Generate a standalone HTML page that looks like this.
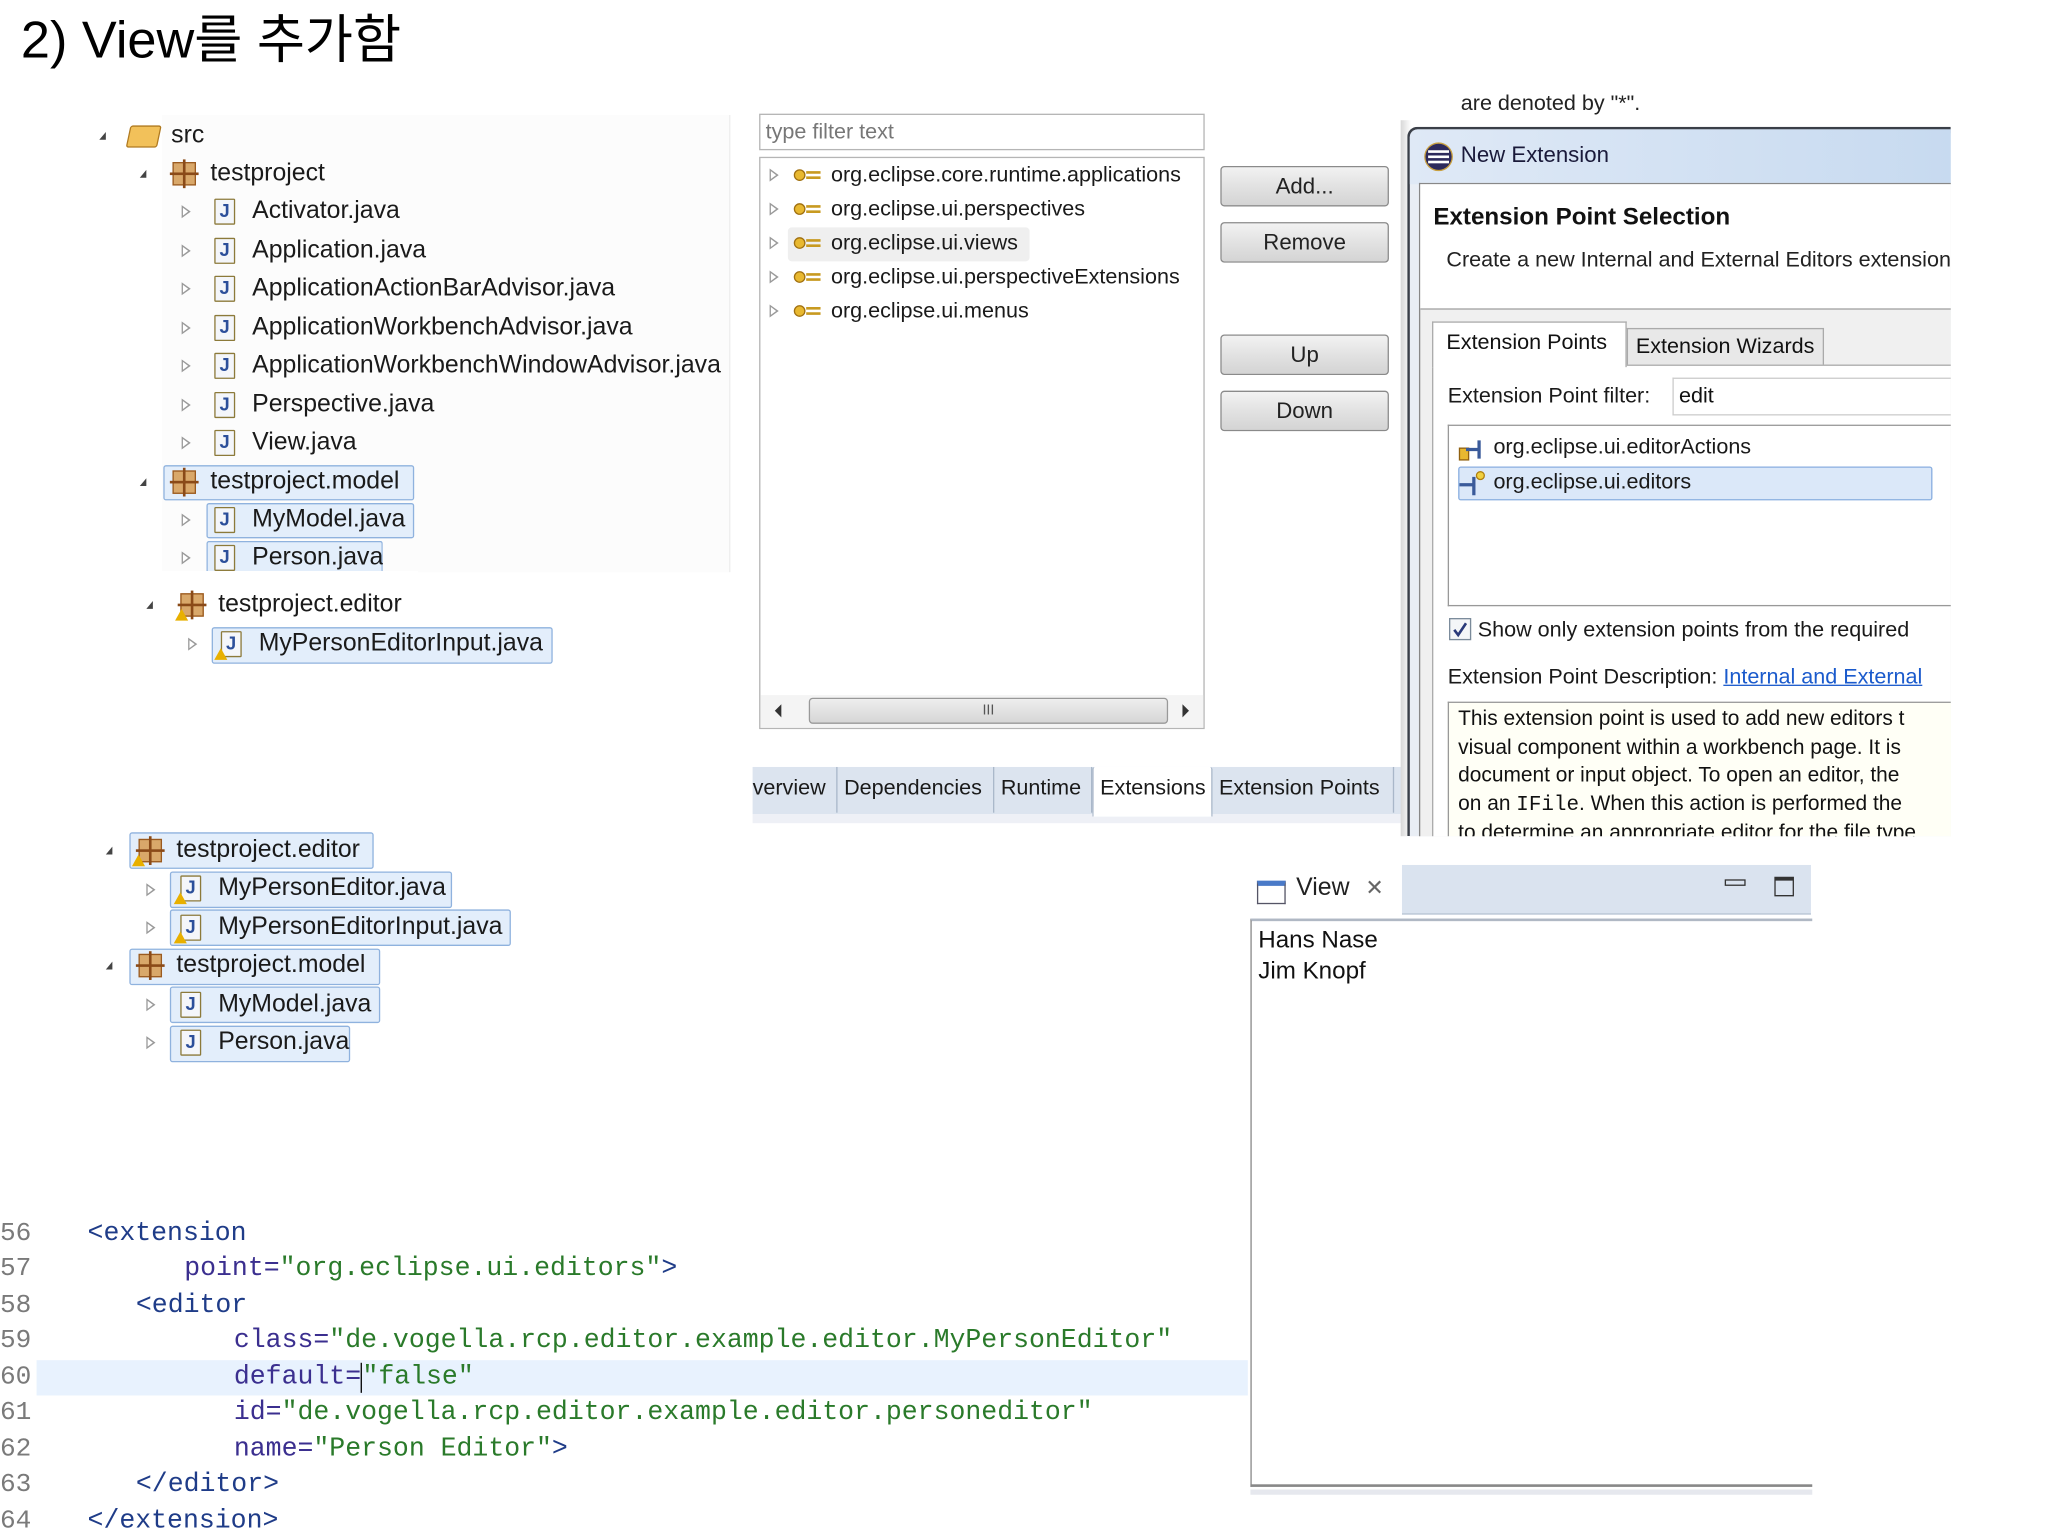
<!DOCTYPE html>
<html><head><meta charset="utf-8">
<style>
*{margin:0;padding:0;box-sizing:border-box}
html,body{width:2048px;height:1536px;overflow:hidden;background:#fff}
#w{position:absolute;left:0;top:0;width:1568px;height:1176px;transform:scale(1.3066);transform-origin:0 0;font-family:"Liberation Sans","Noto Sans CJK KR",sans-serif;color:#111}
.a{position:absolute;white-space:nowrap}
.t{position:absolute;white-space:nowrap;height:24px;line-height:24px}
.tr{font-size:19px;color:#1a1a1a}
.sel{position:absolute;background:#e3eefb;border:1px solid #8fb2de;border-radius:2px}
.ex{position:absolute;width:0;height:0;border-left:5px solid transparent;border-bottom:6px solid #444;}
.co{position:absolute;width:0;height:0;border-top:5px solid transparent;border-bottom:5px solid transparent;border-left:7px solid #9a9a9a}
.co:after{content:"";position:absolute;left:-6px;top:-3px;border-top:3px solid transparent;border-bottom:3px solid transparent;border-left:4px solid #fff}
.jf{position:absolute;width:16px;height:20px;border:1.5px solid #8c7a3a;background:#f4f6fa;border-radius:1px}
.jf:after{content:"J";position:absolute;left:3px;top:0px;font:bold 14px "Liberation Sans",sans-serif;color:#2c4f9a}
.pk{position:absolute;width:18px;height:18px;background:#d9a86a;border:1px solid #9a5a20}
.pk:before{content:"";position:absolute;left:7px;top:-3px;width:2px;height:22px;background:#8a4a18}
.pk:after{content:"";position:absolute;top:7px;left:-3px;height:2px;width:22px;background:#8a4a18}
.warn{position:absolute;width:0;height:0;border-left:5px solid transparent;border-right:5px solid transparent;border-bottom:9px solid #e8b000}
.mid{font-size:16.5px;color:#1a1a1a}
.btn{position:absolute;left:934px;width:129px;height:31px;border:1px solid #8a8a8a;border-radius:3px;background:linear-gradient(#f2f2f2,#e2e2e2 50%,#d4d4d4);font-size:17px;text-align:center;line-height:29px;color:#222}
.tab{position:absolute;top:587px;height:35px;line-height:33px;font-size:16.5px;border-right:1px solid #a9b7c9;padding-left:5px;color:#1a1a1a}
.code{font-family:"Liberation Mono",monospace;font-size:20.3px;position:absolute;white-space:pre;height:27px;line-height:27px}
.ln{position:absolute;left:0;font-family:"Liberation Mono",monospace;font-size:20px;color:#7a7a7a;height:27px;line-height:27px}
.tg{color:#1f3c88}.at{color:#3b2f8f}.vl{color:#2a7a2a}
.d{font-size:16.5px;color:#1a1a1a}
</style></head><body><div id="w">

<div class="a" style="left:16px;top:6px;font-size:40px;line-height:50px;color:#000">2) View를 추가함</div>

<!-- tree 1 -->
<div class="a" style="left:124px;top:88px;width:435px;height:350px;background:#fcfcfc;border-right:1px solid #eee"></div>
<div class="sel" style="left:125px;top:356px;width:192px;height:27px"></div>
<div class="sel" style="left:158px;top:385px;width:159px;height:27px"></div>
<div class="sel" style="left:158px;top:414px;width:135px;height:27px;border-bottom:none"></div>
<div class="a" style="left:0;top:438px;width:560px;height:12px;background:#fff"></div>
<div class="sel" style="left:162px;top:480px;width:261px;height:28px"></div>

<div class="ex" style="left:76px;top:101px"></div>
<div class="a" style="left:98px;top:96px;width:24px;height:17px;background:#f2c15a;border:1px solid #b07a20;border-radius:2px;transform:skewX(-12deg)"></div>
<div class="t tr" style="left:131px;top:92px">src</div>
<div class="ex" style="left:107px;top:130px"></div><div class="pk" style="left:132px;top:124px"></div>
<div class="t tr" style="left:161px;top:121px">testproject</div>

<div class="co" style="left:139px;top:157px"></div><div class="jf" style="left:164px;top:152px"></div><div class="t tr" style="left:193px;top:150px">Activator.java</div>
<div class="co" style="left:139px;top:187px"></div><div class="jf" style="left:164px;top:182px"></div><div class="t tr" style="left:193px;top:180px">Application.java</div>
<div class="co" style="left:139px;top:216px"></div><div class="jf" style="left:164px;top:211px"></div><div class="t tr" style="left:193px;top:209px">ApplicationActionBarAdvisor.java</div>
<div class="co" style="left:139px;top:246px"></div><div class="jf" style="left:164px;top:241px"></div><div class="t tr" style="left:193px;top:239px">ApplicationWorkbenchAdvisor.java</div>
<div class="co" style="left:139px;top:275px"></div><div class="jf" style="left:164px;top:270px"></div><div class="a" style="left:193px;top:268px;width:365px;overflow:hidden;height:24px;line-height:24px;font-size:19px;color:#1a1a1a">ApplicationWorkbenchWindowAdvisor.java</div>
<div class="co" style="left:139px;top:305px"></div><div class="jf" style="left:164px;top:300px"></div><div class="t tr" style="left:193px;top:298px">Perspective.java</div>
<div class="co" style="left:139px;top:334px"></div><div class="jf" style="left:164px;top:329px"></div><div class="t tr" style="left:193px;top:327px">View.java</div>
<div class="ex" style="left:107px;top:366px"></div><div class="pk" style="left:132px;top:360px"></div><div class="t tr" style="left:161px;top:357px">testproject.model</div>
<div class="co" style="left:139px;top:393px"></div><div class="jf" style="left:164px;top:388px"></div><div class="t tr" style="left:193px;top:386px">MyModel.java</div>
<div class="co" style="left:139px;top:422px"></div><div class="jf" style="left:164px;top:417px;height:20px"></div><div class="a" style="left:193px;top:415px;height:22px;overflow:hidden;line-height:24px;font-size:19px;color:#1a1a1a">Person.java</div>
<div class="a" style="left:120px;top:437px;width:200px;height:4px;background:#fff"></div>

<div class="ex" style="left:112px;top:460px"></div><div class="pk" style="left:138px;top:454px"></div><div class="warn" style="left:134px;top:466px"></div>
<div class="t tr" style="left:167px;top:451px">testproject.editor</div>
<div class="co" style="left:144px;top:488px"></div><div class="jf" style="left:169px;top:483px"></div><div class="warn" style="left:164px;top:496px"></div>
<div class="t tr" style="left:198px;top:481px">MyPersonEditorInput.java</div>

<!-- middle panel -->
<div class="a" style="left:581px;top:87px;width:341px;height:28px;border:1px solid #b5b5b5;font-size:16.5px;color:#777;line-height:26px;padding-left:4px">type filter text</div>
<div class="a" style="left:581px;top:120px;width:341px;height:438px;border:1px solid #b5b5b5;background:#fff"></div>
<div class="a" style="left:603px;top:174px;width:185px;height:26px;background:#efefef;border-radius:3px"></div>
<div class="co" style="left:589px;top:129px"></div><svg class="a" style="left:607px;top:128px" width="22" height="12"><circle cx="5" cy="6" r="4" fill="#e8b830" stroke="#a07010"/><path d="M10 4h11M10 8h11" stroke="#c89a20" stroke-width="2"/></svg><div class="t mid" style="left:636px;top:122px">org.eclipse.core.runtime.applications</div>
<div class="co" style="left:589px;top:155px"></div><svg class="a" style="left:607px;top:154px" width="22" height="12"><circle cx="5" cy="6" r="4" fill="#e8b830" stroke="#a07010"/><path d="M10 4h11M10 8h11" stroke="#c89a20" stroke-width="2"/></svg><div class="t mid" style="left:636px;top:148px">org.eclipse.ui.perspectives</div>
<div class="co" style="left:589px;top:181px"></div><svg class="a" style="left:607px;top:180px" width="22" height="12"><circle cx="5" cy="6" r="4" fill="#e8b830" stroke="#a07010"/><path d="M10 4h11M10 8h11" stroke="#c89a20" stroke-width="2"/></svg><div class="t mid" style="left:636px;top:174px">org.eclipse.ui.views</div>
<div class="co" style="left:589px;top:207px"></div><svg class="a" style="left:607px;top:206px" width="22" height="12"><circle cx="5" cy="6" r="4" fill="#e8b830" stroke="#a07010"/><path d="M10 4h11M10 8h11" stroke="#c89a20" stroke-width="2"/></svg><div class="t mid" style="left:636px;top:200px">org.eclipse.ui.perspectiveExtensions</div>
<div class="co" style="left:589px;top:233px"></div><svg class="a" style="left:607px;top:232px" width="22" height="12"><circle cx="5" cy="6" r="4" fill="#e8b830" stroke="#a07010"/><path d="M10 4h11M10 8h11" stroke="#c89a20" stroke-width="2"/></svg><div class="t mid" style="left:636px;top:226px">org.eclipse.ui.menus</div>
<div class="a" style="left:582px;top:532px;width:339px;height:25px;background:#f4f4f4"></div>
<div class="a" style="left:593px;top:539px;border-top:5px solid transparent;border-bottom:5px solid transparent;border-right:5px solid #333"></div>
<div class="a" style="left:905px;top:539px;border-top:5px solid transparent;border-bottom:5px solid transparent;border-left:5px solid #333"></div>
<div class="a" style="left:619px;top:534px;width:275px;height:20px;border:1px solid #999;border-radius:3px;background:linear-gradient(#eee,#d6d6d6);font-size:11px;text-align:center;line-height:18px;color:#555">III</div>

<div class="btn" style="top:127px">Add...</div>
<div class="btn" style="top:170px">Remove</div>
<div class="btn" style="top:256px">Up</div>
<div class="btn" style="top:299px">Down</div>

<div class="a" style="left:576px;top:587px;width:505px;height:36px;background:#dce4ef"></div>
<div class="a" style="left:576px;top:623px;width:505px;height:7px;background:#eef0f6"></div>
<div class="tab" style="left:576px;width:65px;padding-left:0">verview</div>
<div class="tab" style="left:641px;width:120px">Dependencies</div>
<div class="tab" style="left:761px;width:75px">Runtime</div>
<div class="tab" style="left:836px;width:92px;background:#fff;height:38px;border-left:1px solid #a9b7c9;border-radius:2px 2px 0 0">Extensions</div>
<div class="tab" style="left:928px;width:139px">Extension Points</div>
<div class="tab" style="left:1067px;width:14px;border-right:none">E</div>

<!-- dialog -->
<div class="t" style="left:1118px;top:67px;font-size:16.5px;color:#222">are denoted by "*".</div>
<div class="a" style="left:1072px;top:92px;width:421px;height:548px;background:linear-gradient(90deg,#d8d8d8,#fff 8px)"></div>
<div class="a" style="left:1077px;top:97px;width:416px;height:543px;background:#e9eef5;border-left:2px solid #3a3f48;border-top:2px solid #3a3f48;border-radius:8px 0 0 0"></div>
<div class="a" style="left:1079px;top:99px;width:414px;height:42px;background:linear-gradient(90deg,#dfe9f6,#c7daf0);border-radius:6px 0 0 0"></div>
<div class="a" style="left:1091px;top:110px;width:20px;height:20px;border-radius:50%;background:#2d2a5c;box-shadow:0 0 0 1px #c9a040"></div>
<div class="a" style="left:1093px;top:115px;width:16px;height:2px;background:#fff"></div>
<div class="a" style="left:1093px;top:119px;width:16px;height:2px;background:#fff"></div>
<div class="a" style="left:1093px;top:123px;width:16px;height:2px;background:#fff"></div>
<div class="t" style="left:1118px;top:107px;font-size:17px;color:#1a1a3a">New Extension</div>
<div class="a" style="left:1086px;top:140px;width:407px;height:500px;background:#f0f0f0;border-left:1px solid #888;border-top:1px solid #888"></div>
<div class="a" style="left:1087px;top:141px;width:406px;height:96px;background:#fff;border-bottom:1px solid #a0a0a0"></div>
<div class="t" style="left:1097px;top:154px;font-size:18.5px;font-weight:bold;color:#111">Extension Point Selection</div>
<div class="a" style="left:1107px;top:187px;width:386px;overflow:hidden;height:24px;line-height:24px;font-size:16.5px;color:#222">Create a new Internal and External Editors extension</div>
<div class="a" style="left:1096px;top:279px;width:397px;height:361px;background:#fff;border-left:1px solid #aaa;border-top:1px solid #aaa"></div>
<div class="a" style="left:1096px;top:246px;width:149px;height:35px;background:#fff;border:1px solid #aaa;border-bottom:none;font-size:16.5px;line-height:30px;padding-left:10px">Extension Points</div>
<div class="a" style="left:1245px;top:251px;width:151px;height:28px;background:#e8e8e8;border:1px solid #aaa;border-bottom:none;font-size:16.5px;line-height:26px;padding-left:6px">Extension Wizards</div>
<div class="t d" style="left:1108px;top:291px">Extension Point filter:</div>
<div class="a" style="left:1280px;top:289px;width:213px;height:29px;border:1px solid #ccc;border-right:none;font-size:16.5px;line-height:27px;padding-left:4px">edit</div>
<div class="a" style="left:1108px;top:325px;width:385px;height:139px;border:1px solid #999;border-right:none"></div>
<div class="a" style="left:1116px;top:357px;width:363px;height:26px;background:#dbe8f9;border:1px solid #89aee0;border-radius:2px"></div>
<svg class="a" style="left:1116px;top:332px" width="24" height="22"><rect x="1" y="11" width="7" height="9" fill="#e8b830" stroke="#906010"/><path d="M6 12h10M16 5v14" stroke="#3a5a9a" stroke-width="2.5"/></svg>
<svg class="a" style="left:1116px;top:359px" width="24" height="22"><path d="M1 12h10M12 6v14" stroke="#3a5a9a" stroke-width="2.5"/><circle cx="17" cy="5" r="3" fill="#f0d040" stroke="#b08010"/></svg>
<div class="t d" style="left:1143px;top:330px">org.eclipse.ui.editorActions</div>
<div class="t d" style="left:1143px;top:357px">org.eclipse.ui.editors</div>
<div class="a" style="left:1109px;top:473px;width:17px;height:17px;border:1px solid #7a8a9a;background:#f4f6f8"></div>
<svg class="a" style="left:1110px;top:474px" width="15" height="15"><path d="M3 8l3 4 6-9" stroke="#2a3a7a" stroke-width="2" fill="none"/></svg>
<div class="t d" style="left:1131px;top:470px">Show only extension points from the required</div>
<div class="t d" style="left:1108px;top:506px">Extension Point Description: <span style="color:#1a5acc;text-decoration:underline">Internal and External </span></div>
<div class="a" style="left:1108px;top:537px;width:385px;height:103px;border:1px solid #999;border-right:none;border-bottom:none;background:#fffff6;overflow:hidden;font-size:16px;line-height:21.6px;padding:2px 0 0 7px;color:#111;white-space:nowrap">This extension point is used to add new editors t<br>visual component within a workbench page. It is<br>document or input object. To open an editor, the<br>on an <span style="font-family:'Liberation Mono',monospace">IFile</span>. When this action is performed the<br>to determine an appropriate editor for the file type</div>

<!-- tree 2 -->
<div class="sel" style="left:99px;top:637px;width:187px;height:28px"></div>
<div class="sel" style="left:130px;top:667px;width:216px;height:28px"></div>
<div class="sel" style="left:130px;top:696px;width:261px;height:28px"></div>
<div class="sel" style="left:99px;top:726px;width:192px;height:28px"></div>
<div class="sel" style="left:130px;top:755px;width:161px;height:28px"></div>
<div class="sel" style="left:130px;top:785px;width:138px;height:28px"></div>
<div class="ex" style="left:81px;top:648px"></div><div class="pk" style="left:106px;top:642px"></div><div class="warn" style="left:101px;top:654px"></div><div class="t tr" style="left:135px;top:639px">testproject.editor</div>
<div class="co" style="left:112px;top:676px"></div><div class="jf" style="left:138px;top:670px"></div><div class="warn" style="left:133px;top:683px"></div><div class="t tr" style="left:167px;top:668px">MyPersonEditor.java</div>
<div class="co" style="left:112px;top:705px"></div><div class="jf" style="left:138px;top:700px"></div><div class="warn" style="left:133px;top:713px"></div><div class="t tr" style="left:167px;top:698px">MyPersonEditorInput.java</div>
<div class="ex" style="left:81px;top:736px"></div><div class="pk" style="left:106px;top:730px"></div><div class="t tr" style="left:135px;top:727px">testproject.model</div>
<div class="co" style="left:112px;top:764px"></div><div class="jf" style="left:138px;top:759px"></div><div class="t tr" style="left:167px;top:757px">MyModel.java</div>
<div class="co" style="left:112px;top:793px"></div><div class="jf" style="left:138px;top:788px"></div><div class="t tr" style="left:167px;top:786px">Person.java</div>

<!-- code -->
<div class="a" style="left:28px;top:1041px;width:927px;height:27px;background:#e8f2fe"></div>
<div class="ln" style="top:931px">56</div><div class="code tg" style="left:67px;top:931px">&lt;extension</div>
<div class="ln" style="top:958px">57</div><div class="code" style="left:141px;top:958px"><span class="at">point=</span><span class="vl">"org.eclipse.ui.editors"</span><span class="tg">&gt;</span></div>
<div class="ln" style="top:986px">58</div><div class="code tg" style="left:104px;top:986px">&lt;editor</div>
<div class="ln" style="top:1013px">59</div><div class="code" style="left:179px;top:1013px"><span class="at">class=</span><span class="vl">"de.vogella.rcp.editor.example.editor.MyPersonEditor"</span></div>
<div class="ln" style="top:1041px">60</div><div class="code" style="left:179px;top:1041px"><span class="at">default=</span><span class="vl" style="border-left:1.5px solid #000">"false"</span></div>
<div class="ln" style="top:1068px">61</div><div class="code" style="left:179px;top:1068px"><span class="at">id=</span><span class="vl">"de.vogella.rcp.editor.example.editor.personeditor"</span></div>
<div class="ln" style="top:1096px">62</div><div class="code" style="left:179px;top:1096px"><span class="at">name=</span><span class="vl">"Person Editor"</span><span class="tg">&gt;</span></div>
<div class="ln" style="top:1123px">63</div><div class="code tg" style="left:104px;top:1123px">&lt;/editor&gt;</div>
<div class="ln" style="top:1151px">64</div><div class="code tg" style="left:67px;top:1151px">&lt;/extension&gt;</div>

<!-- view -->
<div class="a" style="left:1073px;top:662px;width:313px;height:38px;background:#dae3ef;border-bottom:1px solid #b8c4d4"></div>
<div class="a" style="left:962px;top:674px;width:22px;height:18px;border:1px solid #556;background:#fff;border-top:4px solid #4a7ac8"></div>
<div class="t" style="left:992px;top:668px;font-size:19px;color:#222">View</div>
<div class="t" style="left:1045px;top:668px;font-size:17px;color:#666">✕</div>
<div class="a" style="left:1320px;top:673px;width:16px;height:5px;border:1px solid #333"></div>
<div class="a" style="left:1358px;top:671px;width:15px;height:15px;border:1px solid #333;border-top:3px solid #333"></div>
<div class="a" style="left:957px;top:703px;width:430px;height:435px;border-left:1px solid #888;border-top:2px solid #b0b8c4;border-bottom:2px solid #888;background:#fff"></div>
<div class="a" style="left:957px;top:1140px;width:430px;height:4px;background:#e6e8ee"></div>
<div class="t" style="left:963px;top:707px;font-size:18.5px;color:#111">Hans Nase</div>
<div class="t" style="left:963px;top:731px;font-size:18.5px;color:#111">Jim Knopf</div>

</div></body></html>
